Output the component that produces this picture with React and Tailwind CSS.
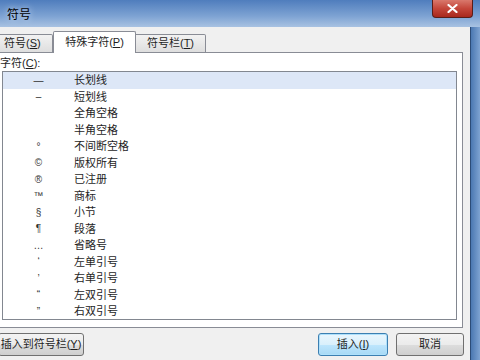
import React from 'react';

const rows = [
  { sym: '—', name: '长划线' },
  { sym: '–', name: '短划线' },
  { sym: '', name: '全角空格' },
  { sym: '', name: '半角空格' },
  { sym: '°', name: '不间断空格' },
  { sym: '©', name: '版权所有' },
  { sym: '®', name: '已注册' },
  { sym: '™', name: '商标' },
  { sym: '§', name: '小节' },
  { sym: '¶', name: '段落' },
  { sym: '…', name: '省略号' },
  { sym: '‘', name: '左单引号' },
  { sym: '’', name: '右单引号' },
  { sym: '“', name: '左双引号' },
  { sym: '”', name: '右双引号' },
];

const font = "font-['Liberation_Sans','Noto_Sans_CJK_SC',sans-serif]";

export default function App() {
  return (
    <div className={`w-[480px] h-[360px] flex flex-col overflow-hidden text-[11px] text-[#1e1e1e] ${font}`}>
      {/* title bar */}
      <div className="h-[27px] flex items-start bg-[linear-gradient(to_bottom,#4f7dbd,#7ea3d3_60%,#a8c2e2)]">
        <span className="mt-[6px] ml-[7px] text-[12px] text-black [text-shadow:0_0_6px_#dfe9f6]">符号</span>
        <div className="ml-auto mr-[7px] w-[41px] h-[18px] rounded-b-[4px] border border-t-0 border-[#5a1d18] bg-[linear-gradient(to_bottom,#d9786c,#c4463a_50%,#a8281d)] flex items-center justify-center">
          <svg width="11" height="9" viewBox="0 0 11 9">
            <path d="M1.5 1 L9.5 8 M9.5 1 L1.5 8" stroke="#ffffff" strokeWidth="2.2" strokeLinecap="round" />
          </svg>
        </div>
      </div>

      <div className="flex-1 flex">
        {/* dialog body */}
        <div className="flex-1 flex flex-col bg-[#f0f0f0]">
          {/* tabs */}
          <div className="h-[25px] flex items-end">
            <div className="h-[19px] w-[53px] -mb-px flex items-center pl-[4px] border border-l-0 border-[#898c95] rounded-tr-[2px] bg-[linear-gradient(to_bottom,#f2f2f2,#dedede)]">
              符号(<u>S</u>)
            </div>
            <div className="relative z-10 h-[22px] w-[83px] -mb-px flex items-center justify-center border border-b-0 border-[#898c95] rounded-t-[2px] bg-white">
              特殊字符(<u>P</u>)
            </div>
            <div className="h-[19px] w-[70px] -mb-px flex items-center justify-center border border-l-0 border-[#898c95] rounded-tr-[2px] bg-[linear-gradient(to_bottom,#f2f2f2,#dedede)]">
              符号栏(<u>T</u>)
            </div>
          </div>

          {/* panel */}
          <div className="h-[276px] mr-[7px] bg-white border border-l-0 border-[#898c95] flex flex-col">
            <div className="h-[18px] pt-[4px] leading-[13px]">字符(<u>C</u>):</div>
            <div className="ml-[2px] mr-[5px] h-[249px] border border-[#828790] bg-white flex flex-col">
              {rows.map((r, i) => (
                <div
                  key={r.name}
                  className={`h-[16.5px] flex items-center ${i === 0 ? 'bg-[#dde7f7]' : ''}`}
                >
                  <span className="w-[71px] text-center text-[#333] text-[10px]">{r.sym}</span>
                  <span>{r.name}</span>
                </div>
              ))}
            </div>
          </div>

          {/* buttons */}
          <div className="mt-[5px] h-[23px] flex items-stretch">
            <div className="-ml-[2px] w-[86px] flex items-center justify-center border border-[#707070] rounded-[3px] bg-[linear-gradient(to_bottom,#f3f3f3,#ebebeb_50%,#dddddd_50%,#cfcfcf)]">
              插入到符号栏(<u>Y</u>)
            </div>
            <div className="ml-auto w-[70px] flex items-center justify-center border border-[#3c7fb1] rounded-[3px] bg-[linear-gradient(to_bottom,#eaf6fd,#d9f0fc_50%,#bee6fd_50%,#a7d9f5)] shadow-[inset_0_0_0_1px_#aee0fb]">
              插入(<u>I</u>)
            </div>
            <div className="ml-[8px] mr-[6px] w-[68px] flex items-center justify-center border border-[#707070] rounded-[3px] bg-[linear-gradient(to_bottom,#f3f3f3,#ebebeb_50%,#dddddd_50%,#cfcfcf)]">
              取消
            </div>
          </div>
        </div>

        {/* right window frame */}
        <div className="w-[10px] border-l border-[#2c4c78] bg-[linear-gradient(to_right,#4b78b2,#7ea3d2)]" />
      </div>
    </div>
  );
}
